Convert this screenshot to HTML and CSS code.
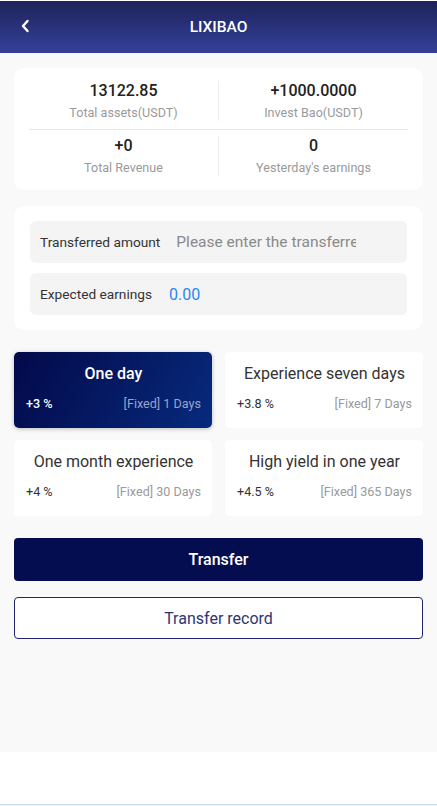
FILE: index.html
```html
<!DOCTYPE html>
<html>
<head>
<meta charset="utf-8">
<link rel="stylesheet" href="styles.css">
</head>
<body>
<div class="page">
  <header class="topbar">
    <span class="back">
      <svg width="10" height="14" viewBox="0 0 10 14"><path d="M7.5 2 L3 7 L7.5 12" fill="none" stroke="#fff" stroke-width="2.4" stroke-linecap="round" stroke-linejoin="round"/></svg>
    </span>
    <h1 class="title">LIXIBAO</h1>
  </header>
  <main class="content">
    <section class="card stats">
      <div class="stat-row">
        <div class="stat"><div class="val">13122.85</div><div class="lbl">Total assets(USDT)</div></div>
        <div class="vline"></div>
        <div class="stat"><div class="val">+1000.0000</div><div class="lbl">Invest Bao(USDT)</div></div>
      </div>
      <div class="hline"></div>
      <div class="stat-row">
        <div class="stat"><div class="val">+0</div><div class="lbl">Total Revenue</div></div>
        <div class="vline"></div>
        <div class="stat"><div class="val">0</div><div class="lbl">Yesterday's earnings</div></div>
      </div>
    </section>
    <section class="card form">
      <div class="field">
        <span class="flabel">Transferred amount</span>
        <input class="finput" type="text" placeholder="Please enter the transferred amount">
      </div>
      <div class="field">
        <span class="flabel">Expected earnings</span>
        <span class="fvalue">0.00</span>
      </div>
    </section>
    <section class="plans">
      <div class="plan active">
        <div class="pname">One day</div>
        <div class="pinfo"><span class="rate">+3 %</span><span class="days">[Fixed] 1 Days</span></div>
      </div>
      <div class="plan">
        <div class="pname">Experience seven days</div>
        <div class="pinfo"><span class="rate">+3.8 %</span><span class="days">[Fixed] 7 Days</span></div>
      </div>
      <div class="plan">
        <div class="pname">One month experience</div>
        <div class="pinfo"><span class="rate">+4 %</span><span class="days">[Fixed] 30 Days</span></div>
      </div>
      <div class="plan">
        <div class="pname">High yield in one year</div>
        <div class="pinfo"><span class="rate">+4.5 %</span><span class="days">[Fixed] 365 Days</span></div>
      </div>
    </section>
    <button class="btn primary">Transfer</button>
    <button class="btn outline">Transfer record</button>
  </main>
  <div class="footer-space"></div>
</div>
</body>
</html>
```
FILE: styles.css
```css
* { box-sizing: border-box; }
html, body { margin: 0; padding: 0; }
body {
  font-family: Roboto, "Noto Sans", Arial, sans-serif;
  background: #f0f0f0;
  width: 437px;
  height: 806px;
  overflow: hidden;
}
.page {
  display: flex;
  flex-direction: column;
  padding-top: 1px;
  background: #fff;
  height: 805px;
  border-bottom: 1px solid #c9dff0;
}
.topbar {
  height: 52px;
  background: linear-gradient(180deg, #1d2359 0%, #35409a 100%);
  display: flex;
  align-items: center;
  justify-content: center;
  position: relative;
}
.back {
  position: absolute;
  left: 20px;
  top: 18px;
  display: flex;
}
.title {
  margin: 0;
  color: #fff;
  font-size: 15.5px;
  font-weight: 500;
}
.content {
  background: #f9f9f9;
  padding: 15px 14px 0;
  height: 699px;
  display: flex;
  flex-direction: column;
}
.card {
  background: #fff;
  border-radius: 10px;
}
.stats {
  padding: 7px 15px 8px;
}
.stat-row {
  display: flex;
  align-items: center;
  height: 52px;
}
.stat {
  flex: 1;
  text-align: center;
}
.val {
  font-size: 16px;
  font-weight: 500;
  color: #222;
  line-height: 20px;
}
.lbl {
  font-size: 12.6px;
  color: #9a9a9a;
  line-height: 18px;
  margin-top: 3px;
}
.vline {
  width: 1px;
  height: 40px;
  background: #eee;
}
.hline {
  height: 1px;
  background: #e8e8e8;
  margin: 2px 0 0;
}
.form {
  margin-top: 16px;
  padding: 15px 16px 15px;
  display: flex;
  flex-direction: column;
  gap: 10px;
}
.field {
  background: #f4f4f4;
  border-radius: 6px;
  height: 42px;
  display: flex;
  align-items: center;
  padding: 0 10px;
}
.flabel {
  font-size: 13.7px;
  color: #333;
  white-space: nowrap;
}
.finput {
  border: none;
  background: transparent;
  outline: none;
  font-family: inherit;
  font-size: 15.5px;
  margin-left: 16px;
  width: 180px;
  padding: 0;
  color: #333;
}
.finput::placeholder { color: #8a8a8a; }
.fvalue {
  margin-left: 17px;
  font-size: 16px;
  color: #2b86f0;
}
.plans {
  margin-top: 22px;
  display: grid;
  grid-template-columns: 1fr 1fr;
  column-gap: 13px;
  row-gap: 12px;
}
.plan {
  background: #fff;
  border-radius: 5px;
  height: 76px;
  padding: 12px 11px 0 12px;
}
.plan.active {
  background: linear-gradient(120deg, #03094a 0%, #072a7c 100%);
  box-shadow: 0 1px 4px rgba(0, 0, 0, 0.25);
}
.pname {
  text-align: center;
  font-size: 16px;
  color: #333;
  line-height: 20px;
}
.pinfo {
  display: flex;
  justify-content: space-between;
  margin-top: 12px;
  font-size: 12.6px;
  line-height: 16px;
}
.rate { color: #333; }
.days { color: #9a9a9a; }
.active .pname { color: #fff; font-weight: 500; }
.active .rate { color: #fff; font-weight: 500; }
.active .days { color: #9aa3c8; }
.btn {
  display: block;
  width: 100%;
  height: 43px;
  border-radius: 4px;
  font-family: inherit;
  font-size: 16px;
  cursor: pointer;
}
.primary {
  margin-top: 22px;
  background: #050d51;
  border: none;
  color: #fff;
  font-weight: 500;
}
.outline {
  margin-top: 16px;
  height: 42px;
  background: #fff;
  border: 1px solid #1e246e;
  color: #2d3573;
}
.footer-space {
  flex: 1;
  background: #fff;
}
```
